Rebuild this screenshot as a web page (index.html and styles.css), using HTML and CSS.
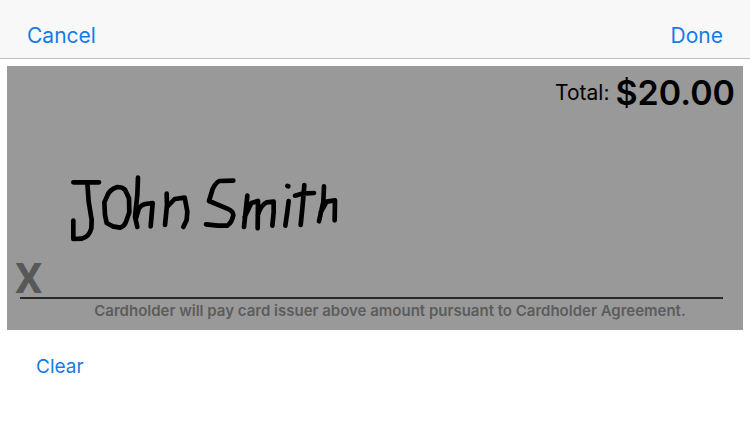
FILE: index.html
```html
<!DOCTYPE html>
<html lang="en">
<head>
<meta charset="UTF-8">
<meta name="viewport" content="width=device-width, initial-scale=1.0">
<title>Signature</title>
<link rel="stylesheet" href="styles.css">
</head>
<body>
<header class="navbar">
    <button type="button" class="link-button">Cancel</button>
    <button type="button" class="link-button">Done</button>
</header>
<main>
    <section class="pad">
        <p class="total">
            <span class="total-label">Total:</span>
            <strong class="total-amount">$20.00</strong>
        </p>
        <svg class="signature" viewBox="0 0 870 255" role="img" aria-label="John Smith">
            <!-- John -->
            <path d="M40 52L117 52M82 54L86 110L95 165L94 190Q88 216 65 221L40 222L40 167"/>
            <path d="M172 66Q148 74 142 92L133 112L135 150L140 174L158 184L180 188Q194 184 198 170L208 142L207 100L195 74Q186 66 172 66Z"/>
            <path d="M234 38L232 90L225 155L232 186M228 160L236 132Q242 120 256 117L278 114L272 184"/>
            <path d="M320 86L321 120L315 180M321 126L344 102L374 98L382 140L380 165L370 186"/>
            <!-- Smith -->
            <path d="M520 47L478 48Q466 54 458 72L447 108L500 130Q520 138 520 150Q516 172 502 182L474 182L438 178"/>
            <path d="M562 92L552 186M554 156L574 114L594 108L593 190M593 152Q602 120 620 112L641 110L641 142L637 182"/>
            <path d="M686 108L682 140L676 182M682 63L685 64"/>
            <path d="M733 60L728 120L722 180M705 92L725 86L762 84"/>
            <path d="M792 64L790 110L777 169M782 142L800 110L825 106L824 166"/>
        </svg>
        <div class="sign-line">X</div>
        <p class="agreement">Cardholder will pay card issuer above amount pursuant to Cardholder Agreement.</p>
    </section>
    <button type="button" class="link-button clear-button">Clear</button>
</main>
</body>
</html>
```
FILE: styles.css
```css
body {
    margin: 0;
    background-color: #fff;
    font-family: Inter, "Liberation Sans", sans-serif;
    color: #000;
}

.navbar {
    display: flex;
    justify-content: space-between;
    padding: 22px 27px 8px;
    background-color: #f8f8f8;
    border-bottom: 1px solid #bfbfbf;
}

.link-button {
    padding: 0;
    border: none;
    background: none;
    color: #167be8;
    font-family: inherit;
    font-size: 21px;
    line-height: 28px;
    cursor: pointer;
}

main {
    padding: 7px;
}

.pad {
    padding: 8px;
    background-color: #999;
}

.total {
    display: flex;
    justify-content: flex-end;
    align-items: center;
    gap: 6px;
    margin: 0;
    line-height: 38px;
}

.total-label {
    font-size: 21px;
}

.total-amount {
    font-size: 34px;
    font-weight: 600;
}

.signature {
    display: block;
    width: 290px;
    margin: 53px 0 0 45px;
    fill: none;
    stroke: #000;
    stroke-width: 14;
    stroke-linecap: round;
    stroke-linejoin: round;
}

.sign-line {
    margin-top: 10px;
    color: #585858;
    font-family: Roboto, "Liberation Sans", sans-serif;
    font-size: 43px;
    font-weight: 700;
    line-height: 37px;
}

.sign-line::after {
    content: "";
    display: block;
    height: 2px;
    margin: 0 12px 0 5px;
    background-color: #2a2a2a;
}

.agreement {
    margin: 0;
    padding: 2px 0 1px 30px;
    color: #5c5c5c;
    font-size: 15px;
    font-weight: 600;
    line-height: 20px;
    text-align: center;
}

.clear-button {
    margin: 23px 0 0 29px;
    font-size: 19px;
}
```
